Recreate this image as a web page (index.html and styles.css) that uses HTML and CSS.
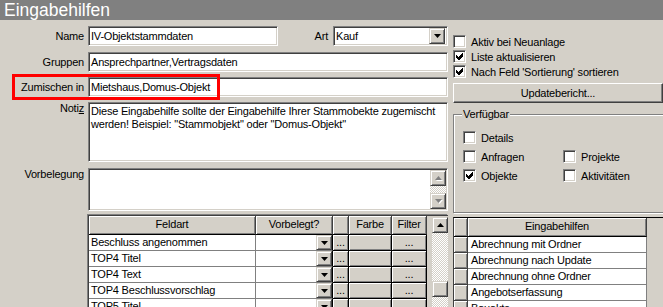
FILE: index.html
```html
<!DOCTYPE html>
<html lang="de">
<head>
  <meta charset="UTF-8">
  <meta name="viewport" content="width=device-width, initial-scale=1.0">
  <title>Eingabehilfen</title>
  <link rel="stylesheet" href="styles.css">
</head>
<body>

  <div class="window">
    <div class="titlebar">Eingabehilfen</div>

    <div class="content">
      <!-- Left side: form fields and field grid -->
      <div class="left">
        <div class="row row-first">
          <label class="lbl">Name</label>
          <div class="field name-field">
            <div class="input name-input">IV-Objektstammdaten</div>
            <span class="art-lbl">Art</span>
            <div class="input select">
              <span class="select-text">Kauf</span>
              <span class="btn drop-btn"><svg width="7" height="4" viewBox="0 0 7 4"><path d="M0 0h7L3.5 4z"/></svg></span>
            </div>
          </div>
        </div>

        <div class="row">
          <label class="lbl">Gruppen</label>
          <div class="field input">Ansprechpartner,Vertragsdaten</div>
        </div>

        <div class="row">
          <label class="lbl">Zumischen in</label>
          <div class="field input">Mietshaus,Domus-Objekt</div>
        </div>

        <div class="row row-memo">
          <label class="lbl lbl-top">Noti<u>z</u></label>
          <div class="field input memo">Diese Eingabehilfe sollte der Eingabehilfe Ihrer Stammobekte zugemischt<br>werden! Beispiel: "Stammobjekt" oder "Domus-Objekt"</div>
        </div>

        <div class="row row-vorbelegung">
          <label class="lbl lbl-top">Vorbelegung</label>
          <div class="field input memo memo-scroll">
            <div class="memo-text"></div>
            <div class="vscroll">
              <span class="btn sbtn"><svg width="7" height="4" viewBox="0 0 7 4" class="arrow-off"><path d="M3.5 0L7 4H0z"/></svg></span>
              <span class="track"></span>
              <span class="btn sbtn"><svg width="7" height="4" viewBox="0 0 7 4" class="arrow-off"><path d="M0 0h7L3.5 4z"/></svg></span>
            </div>
          </div>
        </div>

        <!-- Feldart grid -->
        <div class="grid">
          <div class="grid-table">
            <div class="grid-head">
              <div class="hcell c-feld">Feldart</div>
              <div class="hcell c-vor">Vorbelegt?</div>
              <div class="hcell c-dots"></div>
              <div class="hcell c-farbe">Farbe</div>
              <div class="hcell c-filter">Filter</div>
            </div>
            <div class="grid-row">
              <div class="cell c-feld">Beschluss angenommen</div>
              <div class="cell c-vor"><span class="btn cell-drop"><svg width="7" height="4" viewBox="0 0 7 4"><path d="M0 0h7L3.5 4z"/></svg></span></div>
              <div class="bcell c-dots">...</div>
              <div class="bcell c-farbe"></div>
              <div class="bcell c-filter">...</div>
            </div>
            <div class="grid-row">
              <div class="cell c-feld">TOP4 Titel</div>
              <div class="cell c-vor"><span class="btn cell-drop"><svg width="7" height="4" viewBox="0 0 7 4"><path d="M0 0h7L3.5 4z"/></svg></span></div>
              <div class="bcell c-dots">...</div>
              <div class="bcell c-farbe"></div>
              <div class="bcell c-filter">...</div>
            </div>
            <div class="grid-row">
              <div class="cell c-feld">TOP4 Text</div>
              <div class="cell c-vor"><span class="btn cell-drop"><svg width="7" height="4" viewBox="0 0 7 4"><path d="M0 0h7L3.5 4z"/></svg></span></div>
              <div class="bcell c-dots">...</div>
              <div class="bcell c-farbe"></div>
              <div class="bcell c-filter">...</div>
            </div>
            <div class="grid-row">
              <div class="cell c-feld">TOP4 Beschlussvorschlag</div>
              <div class="cell c-vor"><span class="btn cell-drop"><svg width="7" height="4" viewBox="0 0 7 4"><path d="M0 0h7L3.5 4z"/></svg></span></div>
              <div class="bcell c-dots">...</div>
              <div class="bcell c-farbe"></div>
              <div class="bcell c-filter">...</div>
            </div>
            <div class="grid-row">
              <div class="cell c-feld">TOP5 Titel</div>
              <div class="cell c-vor"><span class="btn cell-drop"><svg width="7" height="4" viewBox="0 0 7 4"><path d="M0 0h7L3.5 4z"/></svg></span></div>
              <div class="bcell c-dots">...</div>
              <div class="bcell c-farbe"></div>
              <div class="bcell c-filter">...</div>
            </div>
          </div>
          <div class="vscroll grid-scroll">
            <span class="btn sbtn"><svg width="7" height="4" viewBox="0 0 7 4"><path d="M3.5 0L7 4H0z"/></svg></span>
            <span class="track track-top"></span>
            <span class="btn thumb"></span>
            <span class="track"></span>
          </div>
        </div>

        <!-- annotation frame -->
        <span class="highlight"></span>
      </div>

      <!-- Right side: options -->
      <div class="right">
        <div class="check-row row-first-check">
          <span class="cb"></span>Aktiv bei Neuanlage
        </div>
        <div class="check-row">
          <span class="cb"><svg width="11" height="11" viewBox="0 0 11 11"><path d="M2 4v3l2 2h1l4-4V2h-1l-3.5 3.5h-0.5z"/></svg></span>Liste aktualisieren
        </div>
        <div class="check-row">
          <span class="cb"><svg width="11" height="11" viewBox="0 0 11 11"><path d="M2 4v3l2 2h1l4-4V2h-1l-3.5 3.5h-0.5z"/></svg></span>Nach Feld 'Sortierung' sortieren
        </div>

        <div class="button update-btn">Updatebericht...</div>

        <fieldset class="group">
          <legend>Verfügbar</legend>
          <div class="group-grid">
            <div class="check-row"><span class="cb"></span>Details</div>
            <div></div>
            <div class="check-row"><span class="cb"></span>Anfragen</div>
            <div class="check-row"><span class="cb"></span>Projekte</div>
            <div class="check-row"><span class="cb"><svg width="11" height="11" viewBox="0 0 11 11"><path d="M2 4v3l2 2h1l4-4V2h-1l-3.5 3.5h-0.5z"/></svg></span>Objekte</div>
            <div class="check-row"><span class="cb"></span>Aktivitäten</div>
          </div>
        </fieldset>

        <div class="lookup">
          <div class="lookup-head">
            <div class="sel hsel"></div>
            <div class="hcell lk-name">Eingabehilfen</div>
          </div>
          <div class="lookup-row"><div class="sel"></div><div class="lk-cell">Abrechnung mit Ordner</div></div>
          <div class="lookup-row"><div class="sel"></div><div class="lk-cell">Abrechnung nach Update</div></div>
          <div class="lookup-row"><div class="sel"></div><div class="lk-cell">Abrechnung ohne Ordner</div></div>
          <div class="lookup-row"><div class="sel"></div><div class="lk-cell">Angebotserfassung</div></div>
          <div class="lookup-row"><div class="sel"></div><div class="lk-cell">Bauakte</div></div>
        </div>
      </div>
    </div>
  </div>

</body>
</html>
```

FILE: styles.css
```css
/* Basic Styling */
* {
  box-sizing: border-box;
}

body {
  margin: 0;
  background-color: #d4d0c8;
  font-family: "Liberation Sans", Arial, sans-serif;
  font-size: 11px;
  letter-spacing: -0.2px;
  color: #000;
  overflow: hidden;
}

.window {
  width: 663px;
  height: 307px;
  overflow: hidden;
}

.titlebar {
  height: 20px;
  background-color: #808080;
  color: #fff;
  font-size: 17.5px;
  line-height: 20px;
  letter-spacing: 0;
  padding-left: 4px;
}

.content {
  display: flex;
}

/* Left column */
.left {
  position: relative;
  width: 448px;
  flex: none;
}

.row {
  display: flex;
  margin-top: 5px;
}

.row-first {
  margin-top: 6px;
}

.row + .row:nth-child(2) {
  margin-top: 6px;
}

.row-vorbelegung {
  margin-top: 6px;
}

.lbl {
  width: 84px;
  flex: none;
  text-align: right;
  line-height: 20px;
}

.lbl-top {
  line-height: 13px;
}

.field {
  width: 360px;
  margin-left: 4px;
}

.input {
  height: 20px;
  background-color: #fff;
  border: 1px solid;
  border-color: #808080 #fff #fff #808080;
  box-shadow: inset 1px 1px 0 #404040, inset -1px -1px 0 #d4d0c8;
  padding: 0 2px;
  line-height: 18px;
  white-space: nowrap;
  overflow: hidden;
}

.name-field {
  display: flex;
  align-items: center;
}

.name-input {
  width: 190px;
}

.art-lbl {
  margin-left: auto;
  margin-right: 5px;
}

.select {
  width: 115px;
  display: flex;
  padding-right: 2px;
}

.select-text {
  flex: 1;
}

.btn {
  display: flex;
  align-items: center;
  justify-content: center;
  background-color: #d4d0c8;
  border: 1px solid;
  border-color: #d4d0c8 #404040 #404040 #d4d0c8;
  box-shadow: inset 1px 1px 0 #fff, inset -1px -1px 0 #808080;
}

.drop-btn {
  width: 16px;
  height: 16px;
  margin-top: 1px;
}

.memo {
  height: 60px;
  white-space: nowrap;
  line-height: 13px;
  padding-top: 2px;
}

.memo-scroll {
  height: 43px;
  display: flex;
  padding: 1px 1px 1px 2px;
}

.memo-text {
  flex: 1;
}

.vscroll {
  width: 16px;
  display: flex;
  flex-direction: column;
  flex: none;
}

.sbtn {
  height: 16px;
  flex: none;
}

.track {
  flex: 1;
  background: repeating-conic-gradient(#fff 0 25%, #d4d0c8 0 50%) 0 0 / 2px 2px;
}

.arrow-off {
  fill: #808080;
  filter: drop-shadow(1px 1px 0 #fff);
}

/* Feldart grid */
.grid {
  display: flex;
  margin: 4px 0 0 88px;
  width: 360px;
  height: 100px;
  border-top: 1px solid #404040;
  border-left: 1px solid #404040;
  box-shadow: -1px -1px 0 #808080;
  overflow: hidden;
}

.grid-table {
  flex: 1;
}

.grid-head,
.grid-row {
  display: flex;
}

.hcell {
  height: 19px;
  line-height: 17px;
  text-align: center;
  background-color: #d4d0c8;
  border-right: 1px solid #404040;
  border-bottom: 1px solid #000;
  box-shadow: inset 1px 1px 0 #fff, inset -1px -1px 0 #808080;
}

.c-feld { width: 167px; }
.c-vor { width: 77px; }
.c-dots { width: 16px; }
.c-farbe { width: 43px; }
.c-filter { width: 35px; }

.cell {
  height: 16px;
  line-height: 15px;
  background-color: #fff;
  border-right: 1px solid #808080;
  border-bottom: 1px solid #808080;
  padding-left: 2px;
  white-space: nowrap;
  overflow: hidden;
}

.cell.c-vor {
  display: flex;
  justify-content: flex-end;
  padding-left: 0;
  border-right-color: #000;
}

.cell-drop {
  width: 16px;
  height: 15px;
}

.bcell {
  height: 16px;
  line-height: 15px;
  text-align: center;
  background-color: #d4d0c8;
  border-right: 1px solid #000;
  border-bottom: 1px solid #000;
  box-shadow: inset 1px 1px 0 #fff, inset -1px -1px 0 #808080;
}

.grid-scroll {
  margin-left: 5px;
  padding-top: 1px;
}

.track-top {
  flex: none;
  height: 48px;
}

.thumb {
  height: 16px;
  flex: none;
}

/* annotation frame around "Zumischen in" */
.highlight {
  position: absolute;
  left: 12px;
  top: 54px;
  width: 208px;
  height: 26px;
  border: 3px solid #ff0000;
}

/* Right column */
.right {
  width: 215px;
  flex: none;
  margin-left: 5px;
}

.check-row {
  display: flex;
  align-items: center;
  gap: 5px;
  height: 15px;
  white-space: nowrap;
}

.row-first-check {
  margin-top: 14px;
}

.cb {
  width: 13px;
  height: 13px;
  flex: none;
  background-color: #fff;
  border: 1px solid;
  border-color: #808080 #fff #fff #808080;
  box-shadow: inset 1px 1px 0 #404040, inset -1px -1px 0 #d4d0c8;
}

.cb svg {
  display: block;
  shape-rendering: crispEdges;
}

.button {
  background-color: #d4d0c8;
  border: 1px solid;
  border-color: #fff #404040 #404040 #fff;
  box-shadow: inset -1px -1px 0 #808080;
  text-align: center;
}

.update-btn {
  width: 210px;
  height: 20px;
  line-height: 18px;
  margin-top: 4px;
}

.group {
  margin: 5px 0 0;
  padding: 0 0 0 9px;
  min-width: 0;
  height: 105px;
  border: 1px solid #808080;
  box-shadow: 1px 1px 0 #fff, inset 1px 1px 0 #fff;
}

.group legend {
  padding: 0 1px;
  margin-left: -1px;
  line-height: 13px;
  background-color: #d4d0c8;
}

.group-grid {
  display: grid;
  grid-template-columns: 100px auto;
  grid-auto-rows: 19px;
  align-items: center;
  padding-top: 7px;
}

/* Eingabehilfen list */
.lookup {
  margin-top: 4px;
  height: 100px;
  border-top: 1px solid #000;
  border-left: 1px solid #404040;
  overflow: hidden;
}

.lookup-head,
.lookup-row {
  display: flex;
}

.sel {
  width: 14px;
  height: 16px;
  flex: none;
  background-color: #d4d0c8;
  border-right: 1px solid #404040;
  border-bottom: 1px solid #404040;
  box-shadow: inset 1px 1px 0 #fff, inset -1px -1px 0 #808080;
}

.hsel {
  height: 19px;
  border-bottom-color: #000;
}

.lk-name {
  width: 179px;
}

.lk-cell {
  width: 179px;
  height: 16px;
  line-height: 15px;
  padding-left: 3px;
  background-color: #fff;
  border-right: 1px solid #808080;
  border-bottom: 1px solid #808080;
  white-space: nowrap;
}
```
